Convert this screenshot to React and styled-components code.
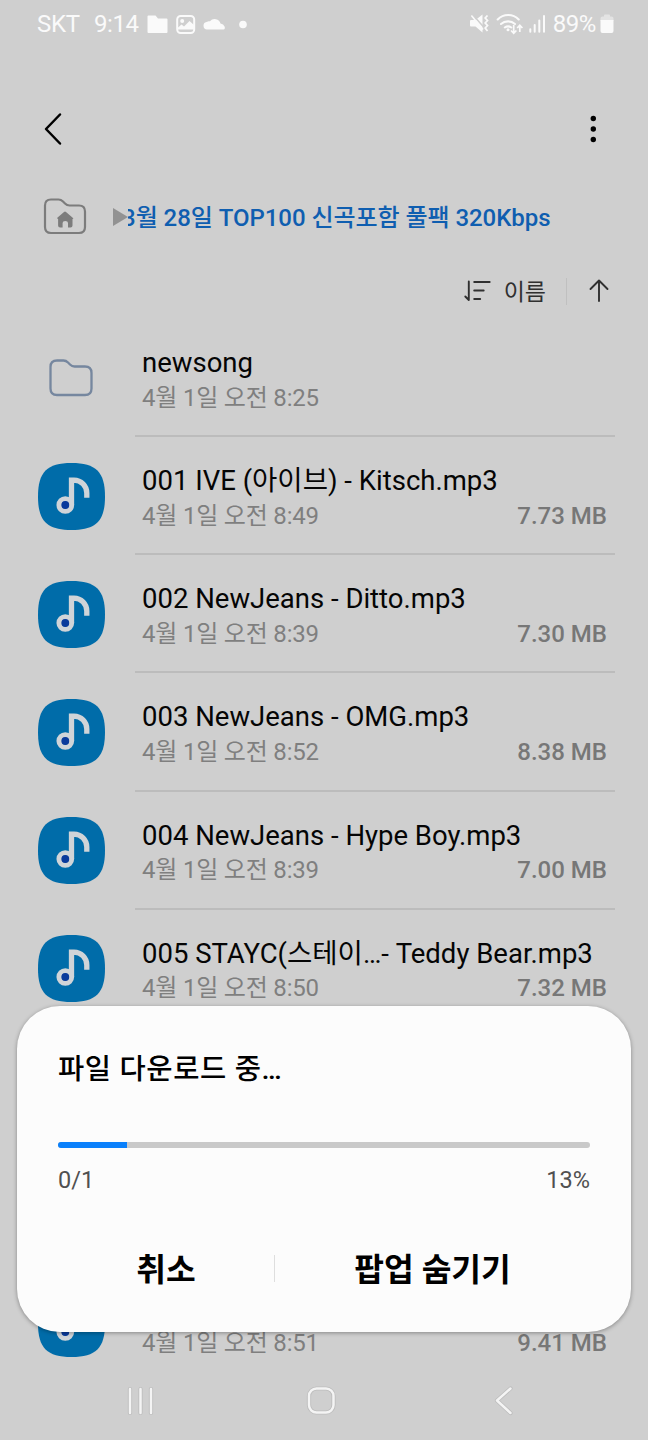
import styled, { createGlobalStyle } from "styled-components";

const files = [
  { name: "newsong", date: "4월 1일 오전 8:25", folder: true },
  { name: "001 IVE (아이브) - Kitsch.mp3", date: "4월 1일 오전 8:49", size: "7.73 MB" },
  { name: "002 NewJeans - Ditto.mp3", date: "4월 1일 오전 8:39", size: "7.30 MB" },
  { name: "003 NewJeans - OMG.mp3", date: "4월 1일 오전 8:52", size: "8.38 MB" },
  { name: "004 NewJeans - Hype Boy.mp3", date: "4월 1일 오전 8:39", size: "7.00 MB" },
  { name: "005 STAYC(스테이…- Teddy Bear.mp3", date: "4월 1일 오전 8:50", size: "7.32 MB" },
  { name: "", date: "4월 1일 오전 8:51", size: "9.41 MB", skip: 2 },
];

const progress = 13;

const StatusIcons = () => (
  <svg width="112" height="24" viewBox="0 0 112 24" fill="#fafafa">
    <path d="M1.5 3.5h7l2.500 3h8.500q1 0 1 1v12.500q0 1-1 1H1.500q-1 0-1-1v-15.500q0-1 1-1z" />
    <rect x="30.200" y="4" width="17" height="17" rx="3.500" fill="none" stroke="#fafafa" strokeWidth="2" />
    <circle cx="35.200" cy="9" r="2" />
    <path d="M30.500 16l4-3.500 2.500 2 5.500-5.500 4.500 4v4.500h-16.500z" />
    <path d="M60 17.500a3.800 3.800 0 0 1-.5-7.500c1.500-1 3-.8 3.500-.7a6 6 0 0 1 10.500 2.300q3 .3 4.200 3.200.6 2.700-1.200 2.700z" />
    <circle cx="96" cy="12.500" r="3.800" />
  </svg>
);

const SignalIcons = () => (
  <svg width="78" height="24" viewBox="0 0 78 24" fill="none" stroke="#fafafa">
    <path d="M1 9q0-1 1-1h4.500l7-5.500v18l-7-6h-4.500q-1 0-1-1z" fill="#fafafa" stroke="none" />
    <path d="M3.500 2.500l12 13.500" stroke="#cfcfcf" strokeWidth="1.600" />
    <path d="M2.400 3.600l11.600 14" strokeWidth="1.600" />
    <path d="M18.500 3.500l-2.300 2.500 2.300 2.500-2.300 2.500 2.300 2.500-2.300 2.500 2.300 3" strokeWidth="1.800" />
    <path d="M28.700 7.500a14.500 14.500 0 0 1 21 0M32 12a10.500 10.500 0 0 1 14 0M35.800 15.500a5.500 5.500 0 0 1 6.500 0" strokeWidth="2.100" strokeLinecap="round" />
    <circle cx="39" cy="17.800" r="1.500" fill="#fafafa" stroke="none" />
    <path d="M44.700 13v8M42 18.500l2.700 2.700 2.700-2.700M50.800 20v-6.500M48.200 16l2.600-2.700 2.600 2.700" strokeWidth="1.700" />
    <path d="M61.300 17.300v2.500M65.700 13v6.800M70.300 8.500v11.300M75 4v15.800" strokeWidth="2" strokeLinecap="round" />
  </svg>
);

const Battery = () => (
  <svg width="14" height="20" viewBox="0 0 14 20">
    <path d="M4 1.500Q4 .5 5 .5h4q1 0 1 1v1h1.500q2 0 2 2v2.500H.5V4.500q0-2 2-2H4z" fill="#e3e3e3" />
    <path d="M.5 6h13v11q0 2-2 2h-9q-2 0-2-2z" fill="#fafafa" />
  </svg>
);

const BackIcon = () => (
  <svg width="20" height="34" viewBox="0 0 20 34" fill="none" stroke="#000" strokeWidth="2.500" strokeLinecap="round" strokeLinejoin="round">
    <path d="M17 2.500L3 17l14 14.500" />
  </svg>
);

const MoreIcon = () => (
  <svg width="6" height="28" viewBox="0 0 6 28">
    <circle cx="3.300" cy="3.500" r="2.700" />
    <circle cx="3.300" cy="14" r="2.700" />
    <circle cx="3.300" cy="24.500" r="2.700" />
  </svg>
);

const HomeFolderIcon = () => (
  <svg width="44" height="38" viewBox="0 0 44 38">
    <path
      d="M2 7.500q0-6 6-6h7.500q2.500 0 4.500 2l2 2q2 2 4.500 2H36q6 0 6 6v15.500q0 6-6 6H8q-6 0-6-6z"
      fill="none"
      stroke="#7c7c7c"
      strokeWidth="2.200"
    />
    <path d="M14 20l7-6q1-.8 2 0l7 6q1 1-.5 1V27.500q0 2-2 2h-2.500v-4.500q0-2-2.700-2t-2.700 2V29.500h-2.500q-2 0-2-2v-6.500q-1.500 0-.6-1z" fill="#7c7c7c" />
  </svg>
);

const SortIcon = () => (
  <svg width="28" height="24" viewBox="0 0 28 24" fill="none" stroke="#303030" strokeWidth="1.900" strokeLinecap="round" strokeLinejoin="round">
    <path d="M4.800 2.500v18.500L1.300 17.500M10.200 3h15.500M10.200 11.500h9.500M10.200 20h6" />
  </svg>
);

const UpIcon = () => (
  <svg width="20" height="24" viewBox="0 0 20 24" fill="none" stroke="#303030" strokeWidth="1.900" strokeLinecap="round" strokeLinejoin="round">
    <path d="M10 22V1.500M1.500 10L10 1.500l8.500 8.500" />
  </svg>
);

const FolderIcon = () => (
  <svg width="44" height="38" viewBox="0 0 44 38" fill="none" stroke="#76879f" strokeWidth="2.300">
    <path d="M1.500 8q0-6.500 6.500-6.500h6.500q2.500 0 4.500 2l2 2q2 2 4.500 2H36q6.500 0 6.500 6.500v15.500q0 6.500-6.500 6.500H8q-6.500 0-6.500-6.500z" />
  </svg>
);

const MusicIcon = () => (
  <svg width="67" height="67" viewBox="0 0 67 67" fill="none">
    <path d="M33.500 0C58 0 67 9 67 33.500S58 67 33.500 67 0 58 0 33.500 9 0 33.500 0z" fill="#006ca9" />
    <path d="M33.500 42V17.200H36a12.800 12.800 0 0 1 12.800 12.800v4.700" stroke="#d0d4d8" strokeWidth="5.300" />
    <circle cx="27.300" cy="42" r="6.200" stroke="#d0d4d8" strokeWidth="5.300" />
    <circle cx="27.300" cy="42" r="3.900" fill="#0a3a9c" />
  </svg>
);

const RecentsShape = () => <path d="M4 3v24M14.500 3v24M25 3v24" />;
const HomeShape = () => <rect x="3" y="2.500" width="24.500" height="24" rx="7.500" />;
const BackShape = () => <path d="M21.500 2.500L8 14.500l13.500 12.500" />;

// light stroke with a slightly darker halo
const NavIcon = ({ shape: Shape }) => (
  <svg width="30" height="30" viewBox="0 0 30 30" fill="none" strokeLinecap="round" strokeLinejoin="round">
    <g stroke="#bdbdbd" strokeWidth="4.200">
      <Shape />
    </g>
    <g stroke="#f4f4f4" strokeWidth="2.500">
      <Shape />
    </g>
  </svg>
);

const App = () => {
  return (
    <Screen>
      <GlobalStyle />
      <StatusBar>
        <Carrier>SKT</Carrier>
        <Clock>9:14</Clock>
        <StatusIcons />
        <StatusRight>
          <SignalIcons />
          <span>89%</span>
          <Battery />
        </StatusRight>
      </StatusBar>
      <Toolbar>
        <BackIcon />
        <MoreIcon />
      </Toolbar>
      <Breadcrumb>
        <HomeFolderIcon />
        <Arrow />
        <Path>
          <span>3월 28일 TOP100 신곡포함 풀팩 320Kbps</span>
        </Path>
      </Breadcrumb>
      <SortBar>
        <SortIcon />
        <SortLabel>이름</SortLabel>
        <SortDivider />
        <UpIcon />
      </SortBar>
      <FileList>
        {files.map((file) => (
          <FileRow key={file.date + file.name} $skip={file.skip}>
            <Thumb>{file.folder ? <FolderIcon /> : <MusicIcon />}</Thumb>
            <FileInfo $last={!!file.skip}>
              <FileName>{file.name}</FileName>
              <FileMeta>
                <span>{file.date}</span>
                <FileSize>{file.size}</FileSize>
              </FileMeta>
            </FileInfo>
          </FileRow>
        ))}
      </FileList>
      <NavBar>
        <NavIcon shape={RecentsShape} />
        <NavIcon shape={HomeShape} />
        <NavIcon shape={BackShape} />
      </NavBar>
      <Dialog>
        <DialogTitle>파일 다운로드 중…</DialogTitle>
        <Track>
          <Bar style={{ width: `${progress}%` }} />
        </Track>
        <Counts>
          <span>0/1</span>
          <span>{progress}%</span>
        </Counts>
        <Actions>
          <Action $width="216px">취소</Action>
          <ActionDivider />
          <Action $width="315px">팝업 숨기기</Action>
        </Actions>
      </Dialog>
    </Screen>
  );
};

export default App;

const GlobalStyle = createGlobalStyle`
  * {
    box-sizing: border-box;
  }
  body {
    margin: 0;
    background: #cfcfcf;
    font-family: Roboto, "Noto Sans CJK KR", sans-serif;
  }
  svg {
    display: block;
    flex: none;
    overflow: visible;
  }
`;

const Screen = styled.div`
  position: relative;
  display: flex;
  flex-direction: column;
  width: 648px;
  height: 1440px;
  overflow: hidden;
  background: #cfcfcf;
`;

const StatusBar = styled.div`
  display: flex;
  align-items: center;
  height: 48px;
  padding: 0 34px 0 37px;
  font-size: 24px;
  line-height: 48px;
  color: #fafafa;
`;

const Carrier = styled.span`
  width: 57px;
  letter-spacing: -0.3px;
`;

const Clock = styled.span`
  width: 53px;
  letter-spacing: -0.4px;
`;

const StatusRight = styled.div`
  display: flex;
  align-items: center;
  margin-left: auto;

  span {
    margin: 0 4px 0 6px;
    letter-spacing: -0.4px;
  }
`;

const Toolbar = styled.div`
  display: flex;
  align-items: center;
  justify-content: space-between;
  height: 162px;
  padding: 0 52px 0 43px;
`;

const Breadcrumb = styled.div`
  display: flex;
  align-items: center;
  height: 54px;
  margin-top: -20px;
  padding-left: 43px;
`;

const Arrow = styled.div`
  margin-left: 26px;
  border-left: 15px solid #929292;
  border-top: 9px solid transparent;
  border-bottom: 9px solid transparent;
`;

const Path = styled.div`
  display: flex;
  justify-content: flex-end;
  width: 422.5px;
  padding-top: 1px;
  overflow: hidden;
  white-space: nowrap;
  font-size: 24px;
  font-weight: 500;
  line-height: 36px;
  letter-spacing: -0.05px;
  color: #0f5eb0;
`;

const SortBar = styled.div`
  display: flex;
  align-items: center;
  justify-content: flex-end;
  height: 74px;
  padding: 20px 39px 0 0;
`;

const SortLabel = styled.span`
  margin: 0 20px 0 12px;
  padding-top: 3px;
  font-size: 23px;
  line-height: 30px;
  color: #303030;
`;

const SortDivider = styled.div`
  width: 1px;
  height: 27px;
  margin-right: 22px;
  background: #c0c0c0;
`;

const FileList = styled.div`
  flex: 1;
  overflow: hidden;
`;

const FileRow = styled.div`
  display: flex;
  height: 118.2px;
  margin-top: ${({ $skip }) => ($skip ? $skip * 118.2 : 0)}px;
  padding-right: 33px;

  &:first-child {
    height: 119px;
  }
`;

const Thumb = styled.div`
  display: flex;
  align-items: center;
  justify-content: center;
  width: 135px;
  padding-left: 7px;
`;

const FileInfo = styled.div`
  flex: 1;
  padding: 26px 8px 0 7px;
  border-bottom: ${({ $last }) => ($last ? "0" : "2px solid #bcbcbc")};
  white-space: nowrap;

  ${FileRow}:first-child & {
    padding-top: 27px;
  }
`;

const FileName = styled.div`
  height: 35.500px;
  font-size: 27.500px;
  line-height: 36px;
  color: #050505;
`;

const FileMeta = styled.div`
  display: flex;
  justify-content: space-between;
  font-size: 24px;
  line-height: 34px;
  letter-spacing: -0.2px;
  color: #7f7f7f;
`;

const FileSize = styled.span`
  font-weight: 500;
  letter-spacing: 0;
  color: #777;
`;

const NavBar = styled.div`
  display: flex;
  align-items: center;
  justify-content: space-between;
  height: 78px;
  padding: 0 129px 0 126px;

  svg:nth-child(2) {
    margin: 0 4px 0 0;
  }
`;

const Dialog = styled.div`
  position: absolute;
  left: 17px;
  bottom: 108px;
  width: 614px;
  height: 326px;
  padding: 44px 41px 0;
  border-radius: 43px;
  background: #fcfcfc;
  box-shadow: 0 1px 4px rgba(0, 0, 0, 0.35);
`;

const DialogTitle = styled.div`
  font-size: 28.500px;
  font-weight: 500;
  line-height: 40px;
  letter-spacing: 0.65px;
  color: #000;
`;

const Track = styled.div`
  height: 6px;
  margin-top: 52px;
  border-radius: 3px;
  background: #c9c9c9;
  overflow: hidden;
`;

const Bar = styled.div`
  height: 100%;
  background: #0a80fb;
`;

const Counts = styled.div`
  display: flex;
  justify-content: space-between;
  margin-top: 17px;
  font-size: 23.500px;
  line-height: 30px;
  color: #505050;
`;

const Actions = styled.div`
  display: flex;
  align-items: center;
  height: 60px;
  margin-top: 43px;
`;

const Action = styled.button`
  width: ${({ $width }) => $width};
  padding: 3px 0 0;
  border: 0;
  background: none;
  font-family: inherit;
  font-size: 32.300px;
  font-weight: 700;
  line-height: 44px;
  color: #000;
`;

const ActionDivider = styled.div`
  width: 1px;
  height: 27px;
  background: #dedede;
`;
